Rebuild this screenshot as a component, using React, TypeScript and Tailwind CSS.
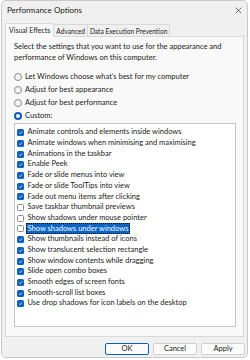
import { useState } from "react";

const effects = [
  { label: "Animate controls and elements inside windows", on: true },
  { label: "Animate windows when minimising and maximising", on: true },
  { label: "Animations in the taskbar", on: true },
  { label: "Enable Peek", on: true },
  { label: "Fade or slide menus into view", on: true },
  { label: "Fade or slide ToolTips into view", on: true },
  { label: "Fade out menu items after clicking", on: true },
  { label: "Save taskbar thumbnail previews", on: false },
  { label: "Show shadows under mouse pointer", on: false },
  { label: "Show shadows under windows", on: false },
  { label: "Show thumbnails instead of icons", on: true },
  { label: "Show translucent selection rectangle", on: true },
  { label: "Show window contents while dragging", on: true },
  { label: "Slide open combo boxes", on: true },
  { label: "Smooth edges of screen fonts", on: true },
  { label: "Smooth-scroll list boxes", on: true },
  { label: "Use drop shadows for icon labels on the desktop", on: true },
];

const modes = [
  "Let Windows choose what\u2019s best for my computer",
  "Adjust for best appearance",
  "Adjust for best performance",
  "Custom:",
];

function Check({ on }: { on: boolean }) {
  if (!on) {
    return (
      <span className="h-[7px] w-[7px] shrink-0 rounded-[1.5px] border border-[#8a8a8a] bg-white" />
    );
  }
  return (
    <span className="flex h-[7px] w-[7px] shrink-0 items-center justify-center rounded-[1.5px] bg-[#0b5fbd]">
      <svg width="5" height="5" viewBox="0 0 10 10">
        <path d="M2 5.2 L4.2 7.4 L8.2 2.8" fill="none" stroke="white" strokeWidth="1.4" />
      </svg>
    </span>
  );
}

export default function App() {
  const [mode, setMode] = useState(3);
  const [selected, setSelected] = useState(9);
  return (
    <div className="h-[360px] w-[250px] bg-white font-['Lato',sans-serif] text-[7.5px] leading-[10.7px] text-[#1b1b1b]">
      <div className="ml-[1px] flex h-[358px] w-[247px] flex-col rounded-[5px] border border-[#c9c9c9] bg-[#f0f0f0]">
        <div className="flex h-[19px] items-center justify-between pl-[5px] pr-[5px] text-[8px]">
          <span>Performance Options</span>
          <svg width="7" height="7" viewBox="0 0 10 10">
            <path d="M1 1 L9 9 M9 1 L1 9" stroke="#333" strokeWidth="1" />
          </svg>
        </div>
        <div className="ml-[3px] mt-[3px] flex h-[14px] items-end text-[7px]">
          <div className="relative z-10 flex h-[14px] items-center rounded-t-[2px] border border-b-0 border-[#d9d9d9] bg-[#f9f9f9] px-[3px]">
            Visual Effects
          </div>
          <div className="flex h-[13px] items-center border-t border-r border-[#d9d9d9] bg-[#f0f0f0] px-[2px] text-[6.6px]">
            Advanced
          </div>
          <div className="flex h-[13px] items-center border-t border-r border-[#d9d9d9] bg-[#f0f0f0] px-[2px] text-[6.6px]">
            Data Execution Prevention
          </div>
        </div>
        <div className="mx-[3px] -mt-[1px] flex h-[301px] flex-col border border-[#d9d9d9] bg-[#f9f9f9] px-[8px] pt-[5px]">
          <p>
            Select the settings that you want to use for the appearance and
            performance of Windows on this computer.
          </p>
          <div className="mt-[7px] flex flex-col">
            {modes.map((m, i) => (
              <label
                key={m}
                onClick={() => setMode(i)}
                className="flex h-[13px] items-center gap-[2px]"
              >
                {mode === i ? (
                  <span className="flex h-[8px] w-[8px] items-center justify-center rounded-full bg-[#0b5fbd]">
                    <span className="h-[4px] w-[4px] rounded-full bg-white" />
                  </span>
                ) : (
                  <span className="h-[8px] w-[8px] rounded-full border border-[#8a8a8a] bg-[#f4f4f4]" />
                )}
                <span className="ml-[1px]">{m}</span>
              </label>
            ))}
          </div>
          <div className="mt-[1px] h-[204px] w-[222px] border border-[#c5c5c5] bg-white pl-[2px] pt-[3px]">
            {effects.map((e, i) => (
              <div
                key={e.label}
                onClick={() => setSelected(i)}
                className="flex h-[10.7px] items-center gap-[2px]"
              >
                <Check on={e.on} />
                <span
                  className={
                    i === selected
                      ? "border border-dotted border-[#0a0a0a] bg-[#0a64c8] px-[0.5px] leading-[9px] text-white"
                      : "px-[1.5px]"
                  }
                >
                  {e.label}
                </span>
              </div>
            ))}
          </div>
        </div>
        <div className="mt-[6px] flex justify-end gap-[4px] pr-[2px]">
          <button className="h-[12px] w-[44px] rounded-[2px] border border-[#0b5fbd] bg-[#fbfbfb] text-[7.5px] leading-none">
            OK
          </button>
          <button className="h-[12px] w-[44px] rounded-[2px] border border-[#d0d0d0] bg-[#fbfbfb] text-[7.5px] leading-none">
            Cancel
          </button>
          <button className="h-[12px] w-[44px] rounded-[2px] border border-[#d0d0d0] bg-[#fbfbfb] text-[7.5px] leading-none">
            Apply
          </button>
        </div>
      </div>
    </div>
  );
}
